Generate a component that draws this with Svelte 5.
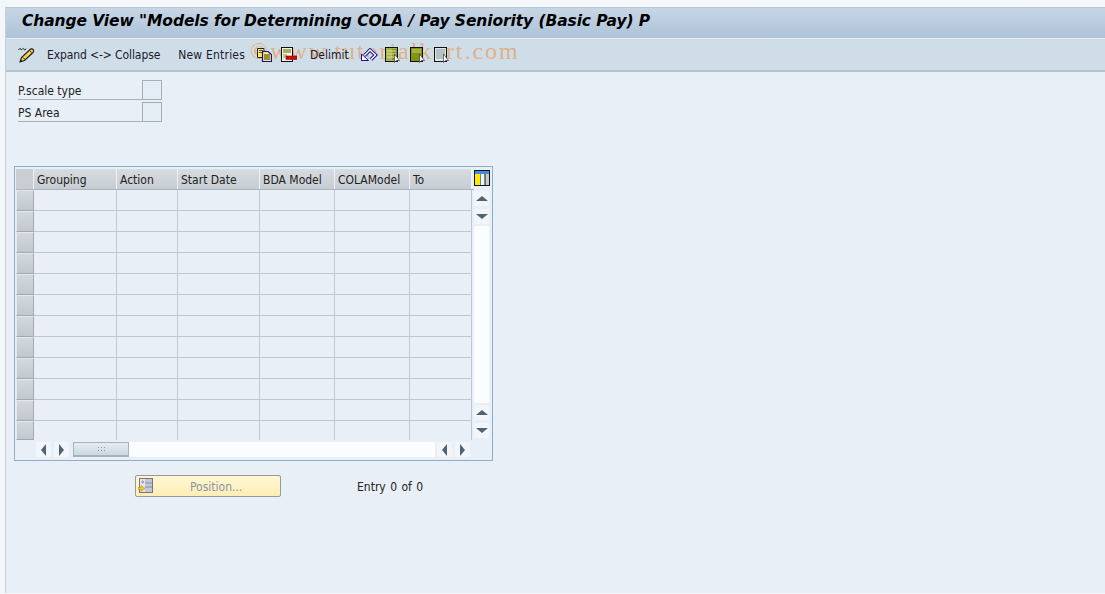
<script>
	const columns = [
		{ label: 'Grouping', width: 83 },
		{ label: 'Action', width: 61 },
		{ label: 'Start Date', width: 82 },
		{ label: 'BDA Model', width: 75 },
		{ label: 'COLAModel', width: 75 },
		{ label: 'To', width: 62 }
	];
	const rows = Array.from({ length: 12 }, (_, i) => i);
</script>

<div class="screen">
	<header class="title">Change View "Models for Determining COLA / Pay Seniority (Basic Pay) P</header>

	<div class="toolbar">
		<span class="watermark">©www.tutorialkart.com</span>
		<svg class="ico pencil" width="17" height="16" viewBox="0 0 17 16">
			<path d="M2 15 L3.5 10.5 L12.5 2 Q14.5 1.5 15.5 3 Q16 4.5 15 5.5 L6.5 13.5 Z" fill="#f7d24e" stroke="#1a1a1a" stroke-width="1.1" />
			<path d="M5 10.5 L7 12.5 M11.5 3.5 L13.5 5.5" stroke="#1a1a1a" />
			<path d="M2 15 L3 12.5 L4.5 14 Z" fill="#222" />
			<path d="M0.5 3 Q1.5 0.5 3 2 Q3 4 4.5 2 Q5.5 0.5 6 2.5 Q7 4 8 1.5" fill="none" stroke="#333" />
		</svg>
		<span class="tb-text first">Expand &lt;-&gt; Collapse</span>
		<span class="tb-text second">New Entries</span>
		<svg class="ico copy" width="15" height="14" viewBox="0 0 15 14">
			<path d="M0.5 0.5 H7 V9.5 H0.5 Z" fill="#ffe95a" stroke="#222" />
			<path d="M2 2.5 H6 M2 4.5 H6" stroke="#555" />
			<path d="M5.5 3.5 H11 L14.5 6.5 V13.5 H5.5 Z" fill="#ffe95a" stroke="#11119a" stroke-width="1.2" />
			<path d="M7 7 H13 M7 9 H13 M7 11 H13" stroke="#333" />
		</svg>
		<svg class="ico del" width="16" height="15" viewBox="0 0 16 15">
			<rect x="0.5" y="0.5" width="11" height="14" fill="#f2f2e8" stroke="#111" />
			<path d="M2 3 H10 M2 5 H10" stroke="#8a9a3a" stroke-width="1.4" />
			<path d="M2 8 H6 M2 10 H6" stroke="#8a9a3a" />
			<rect x="5" y="9" width="11" height="3.5" fill="#e80000" stroke="#222" stroke-width=".5" />
		</svg>
		<span class="tb-text third">Delimit</span>
		<svg class="ico undo" width="17" height="15" viewBox="0 0 17 15">
			<path d="M3.5 8.5 L9 3 L14.5 8 L10 12.5" fill="none" stroke="#11119a" stroke-width="3.4" />
			<path d="M3.5 8.5 L9 3 L14.5 8 L10 12.5" fill="none" stroke="#fff" stroke-width="1.4" />
			<path d="M0.5 7 L7.5 13.5 H0.5 Z" fill="#fff" stroke="#11119a" />
		</svg>
		<svg class="ico sel" width="15" height="16" viewBox="0 0 15 16">
			<rect x="0.5" y="0.5" width="12" height="14" fill="#a8b548" stroke="#111" />
			<rect x="7" y="2" width="5" height="11" fill="#8a9820" />
			<path d="M2 4 H11 M2 7 H11 M2 10 H11" stroke="#dde2a0" />
			<path d="M9.5 7 L9.5 15.5 L11.5 13.5 L14.5 13.5 Z" fill="#fff" stroke="#222" stroke-width=".6" />
		</svg>
		<svg class="ico sel-block" width="15" height="16" viewBox="0 0 15 16">
			<rect x="0.5" y="0.5" width="12" height="14" fill="#82930f" stroke="#111" />
			<path d="M2 3 H11 M2 5 H11" stroke="#c6ce70" />
			<path d="M9.5 7 L9.5 15.5 L11.5 13.5 L14.5 13.5 Z" fill="#fff" stroke="#222" stroke-width=".6" />
		</svg>
		<svg class="ico desel" width="15" height="16" viewBox="0 0 15 16">
			<rect x="0.5" y="0.5" width="12" height="14" fill="#e2e6e9" stroke="#111" />
			<path d="M2 3 H11 M2 5 H11 M2 7 H11 M2 9 H11 M2 11 H11" stroke="#8b97a3" />
			<path d="M9.5 7 L9.5 15.5 L11.5 13.5 L14.5 13.5 Z" fill="#fff" stroke="#222" stroke-width=".6" />
		</svg>
	</div>

	<main class="content">
		<div class="filters">
			<div class="filter">
				<span class="filter-label">P.scale type</span>
				<span class="filter-input"></span>
			</div>
			<div class="filter">
				<span class="filter-label">PS Area</span>
				<span class="filter-input"></span>
			</div>
		</div>

		<div class="table">
			<div class="table-main">
				<div class="head">
					<div class="corner"></div>
					{#each columns as col}
						<div class="th" style="width: {col.width}px">{col.label}</div>
					{/each}
				</div>
				{#each rows as row}
					<div class="row" class:last={row === rows.length - 1}>
						<div class="row-btn"></div>
						{#each columns as col}
							<div class="td" style="width: {col.width}px"></div>
						{/each}
					</div>
				{/each}
			</div>

			<div class="vscroll">
				<svg class="config" width="16" height="16" viewBox="0 0 16 16">
					<rect width="16" height="16" fill="#111" />
					<rect x="1" y="1" width="14" height="3" fill="#3f8fd8" />
					<rect x="1" y="4" width="5" height="11" fill="#ffe900" />
					<rect x="6" y="4" width="1" height="11" fill="#3f8fd8" />
					<rect x="7" y="4" width="3.5" height="11" fill="#f4f4f4" />
					<rect x="11.5" y="4" width="3.5" height="11" fill="#c8ccd0" />
				</svg>
				<div class="sc-btn"><span class="arrow up"></span></div>
				<div class="sc-btn after-up"><span class="arrow down"></span></div>
				<div class="sc-track"></div>
				<div class="sc-btn"><span class="arrow up"></span></div>
				<div class="sc-btn after-up"><span class="arrow down"></span></div>
			</div>

			<div class="hscroll">
				<div class="sc-btn"><span class="arrow left"></span></div>
				<div class="sc-btn"><span class="arrow right"></span></div>
				<div class="thumb"><span class="grip"></span></div>
				<div class="h-track"></div>
				<div class="sc-btn after-track"><span class="arrow left"></span></div>
				<div class="sc-btn"><span class="arrow right"></span></div>
			</div>
		</div>

		<div class="footer">
			<button class="position" disabled>
				<svg width="15" height="16" viewBox="0 0 15 16">
					<rect x="1.5" y="0.5" width="13" height="14" fill="#e4e6ee" stroke="#777" />
					<rect x="7" y="1" width="7" height="13" fill="#c3c7da" />
					<path d="M7 5 H14 M7 9 H14" stroke="#8a8fa8" />
					<path d="M3 4 H6 M4 2.5 L6 4 L4 5.5" fill="none" stroke="#9a9aa8" />
					<path d="M0 9.5 H3 V7.5 L7 10.5 L3 13.5 V11.5 H0 Z" fill="#f2c531" stroke="#b08a10" stroke-width=".5" />
				</svg>
				<span>Position...</span>
			</button>
			<span class="entry">Entry 0 of 0</span>
		</div>
	</main>
</div>

<style>
	:global(body) {
		margin: 0;
		background: #f4f7fa;
		overflow: hidden;
	}

	.screen {
		width: 1100px;
		height: 586px;
		margin: 7px 0 0 5px;
		border-left: 1px solid #c6ced6;
		border-top: 1px solid #bcc6d0;
		box-sizing: border-box;
		background: #e8eff6;
		font-family: "DejaVu Sans", sans-serif;
		font-stretch: condensed;
		font-size: 12px;
		color: #222;
	}

	.title {
		height: 30px;
		box-sizing: border-box;
		padding: 4px 0 0 16px;
		background: linear-gradient(#c7d6e5, #adc3d9);
		font-size: 15.5px;
		font-stretch: normal;
		font-weight: 700;
		font-style: italic;
		letter-spacing: -0.095px;
		color: #000;
		white-space: nowrap;
	}

	.toolbar {
		position: relative;
		display: flex;
		align-items: center;
		height: 34px;
		box-sizing: border-box;
		padding: 0 0 0 12px;
		background: #cfdde9;
		border-top: 1px solid #e4ecf3;
		border-bottom: 2px solid #b6c1cb;
		color: #1a1a2a;
	}

	.ico {
		flex: none;
		position: relative;
	}

	.tb-text {
		position: relative;
		white-space: nowrap;
	}

	.first { margin-left: 12px; letter-spacing: -0.1px; }
	.second { margin-left: 18px; letter-spacing: 0.2px; }
	.copy { margin-left: 12px; }
	.del { margin-left: 9px; }
	.third { margin-left: 13px; }
	.undo { margin-left: 12px; }
	.sel { margin-left: 7px; }
	.sel-block { margin-left: 10px; }
	.desel { margin-left: 9px; }

	.watermark {
		position: absolute;
		left: 244px;
		top: -1px;
		font-family: "Liberation Serif", serif;
		font-stretch: normal;
		font-size: 24px;
		letter-spacing: 1.95px;
		color: rgba(232, 150, 70, 0.62);
		white-space: nowrap;
		pointer-events: none;
	}

	.content {
		padding: 8px 0 0 12px;
	}

	.filters {
		display: flex;
		flex-direction: column;
		gap: 2px;
		width: 144px;
	}

	.filter {
		display: flex;
		justify-content: space-between;
		height: 19px;
		border-bottom: 1px solid #a9b1b8;
	}

	.filter-label {
		padding: 4px 0 0 0;
	}

	.filter-input {
		width: 20px;
		height: 20px;
		box-sizing: border-box;
		border: 1px solid #a7afb6;
		background: #e4edf5;
	}

	.table {
		display: grid;
		grid-template-columns: 458px 18px;
		grid-template-rows: 274px 19px;
		width: 479px;
		height: 295px;
		box-sizing: border-box;
		margin: 44px 0 0 -4px;
		border: 1px solid #8eadc9;
		padding: 1px 0 0 1px;
	}

	.table-main {
		overflow: hidden;
		padding-top: 1px;
	}

	.head {
		display: flex;
		height: 21px;
		border-bottom: 1px solid #aab4be;
		box-sizing: border-box;
	}

	.corner {
		width: 18px;
		flex: none;
		background: #c9ced4;
		border-right: 1px solid #e8eff6;
		box-sizing: border-box;
	}

	.th {
		flex: none;
		box-sizing: border-box;
		padding: 4px 0 0 3px;
		background: linear-gradient(#d7dce1, #c6ccd2);
		border-right: 1px solid #eef2f6;
		white-space: nowrap;
	}

	.row {
		display: flex;
		height: 21px;
	}

	.row.last {
		height: 19px;
	}

	.row-btn {
		width: 18px;
		flex: none;
		box-sizing: border-box;
		background: linear-gradient(#d4d8dd, #c3c8ce);
		border: 1px solid #a3a9af;
		border-top-color: #e6e9ec;
		border-left-color: #e6e9ec;
	}

	.td {
		flex: none;
		box-sizing: border-box;
		border-right: 1px solid #bcc8d4;
		border-bottom: 1px solid #bcc8d4;
	}

	.row.last .td {
		border-bottom: none;
	}

	.vscroll {
		display: flex;
		flex-direction: column;
		align-items: flex-start;
		gap: 2px;
		padding-top: 2px;
	}

	.config {
		margin: 0 0 3px 0;
	}

	.sc-btn {
		display: flex;
		align-items: center;
		justify-content: center;
		width: 15px;
		height: 15px;
		flex: none;
		background: #f2f5fa;
	}

	.after-up {
		margin-top: 1px;
	}

	.sc-track {
		width: 15px;
		height: 177px;
		flex: none;
		background: #fbfcfd;
	}

	.arrow {
		width: 0;
		height: 0;
		border-style: solid;
		border-color: transparent;
	}

	.up { border-width: 0 6px 5px; border-bottom-color: #4f6373; }
	.down { border-width: 5px 6px 0; border-top-color: #4f6373; }
	.left { border-width: 6px 5px 6px 0; border-right-color: #4f6373; }
	.right { border-width: 6px 0 6px 5px; border-left-color: #4f6373; }

	.hscroll {
		grid-column: 1 / 3;
		display: flex;
		align-items: flex-start;
		gap: 3px;
		margin-left: 20px;
	}

	.thumb {
		display: flex;
		align-items: center;
		justify-content: center;
		width: 56px;
		height: 15px;
		box-sizing: border-box;
		margin-left: 1px;
		background: linear-gradient(#e6edf2, #cbd8e2);
		border: 1px solid #a7b1ba;
		border-bottom-width: 2px;
	}

	.grip {
		width: 9px;
		height: 6px;
		background: radial-gradient(circle, #8d97a1 1px, transparent 1px) 0 0 / 3px 3px;
	}

	.h-track {
		width: 306px;
		height: 15px;
		margin-left: -3px;
		background: #fbfcfd;
	}

	.after-track {
		margin-left: -1px;
	}

	.footer {
		display: flex;
		align-items: center;
		margin: 14px 0 0 117px;
	}

	.position {
		display: flex;
		align-items: center;
		width: 146px;
		height: 22px;
		padding: 0 0 0 2px;
		border: 1px solid #9a9a94;
		border-radius: 2px;
		background: linear-gradient(#fff7d2, #fdeeb4);
		font: inherit;
		color: #8b93a8;
	}

	.position span {
		margin: 1px 0 0 37px;
	}

	.entry {
		margin: 2px 0 0 76px;
		color: #222;
		word-spacing: 1px;
	}
</style>
